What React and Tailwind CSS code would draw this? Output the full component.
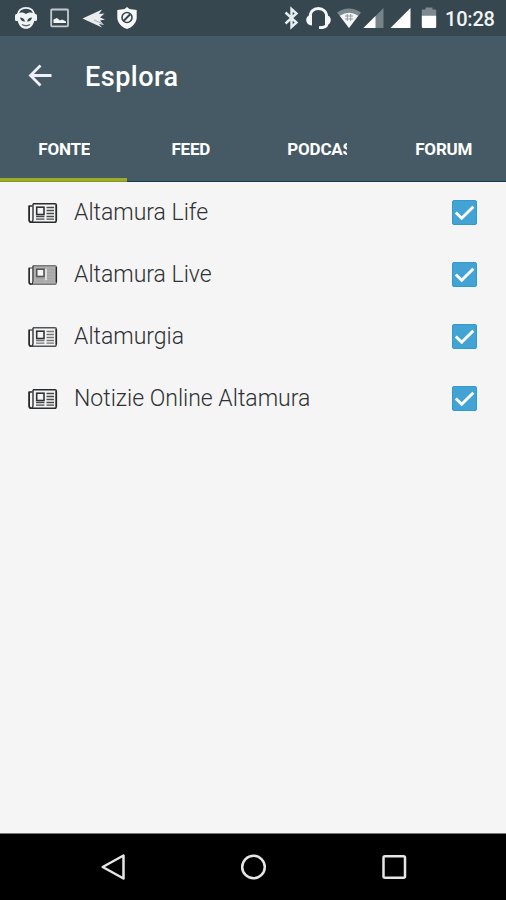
import React, { useState } from 'react';

const tabs = ['FONTE', 'FEED', 'PODCAST', 'FORUM'];

const sources = [
  { name: 'Altamura Life', variant: 'dark' },
  { name: 'Altamura Live', variant: 'faded' },
  { name: 'Altamurgia', variant: 'light' },
  { name: 'Notizie Online Altamura', variant: 'dark' },
];

function NotificationIcons() {
  return (
    <div className="flex items-center">
      {/* headphones face */}
      <svg className="ml-[14px] w-6 h-6" viewBox="0 0 24 24">
        <path d="M3.500 9C4.500 4 8 1.800 12 1.800S19.500 4 20.500 9" fill="none" stroke="#f1f4f5" strokeWidth="1.800" />
        <path d="M3.700 9C5 6 8 6 12 8C16 6 19 6 20.300 9V15C19 20 16 22.800 12 22.800S5 20 3.700 15Z" fill="#f1f4f5" />
        <path d="M6 11.500Q10 11.500 11 15.500Q7 16 6 11.500ZM18 11.500Q14 11.500 13 15.500Q17 16 18 11.500Z" fill="#37474f" />
        <path d="M8 18.500Q12 21 16 18.500" fill="none" stroke="#5c6b72" strokeWidth="1.300" />
        <rect x="1" y="8" width="3.400" height="7" rx="1.500" fill="#f1f4f5" />
        <rect x="19.600" y="8" width="3.400" height="7" rx="1.500" fill="#f1f4f5" />
      </svg>
      {/* screenshot */}
      <svg className="ml-[12px] w-5 h-5" viewBox="0 0 20 20">
        <rect x="1.200" y="1.500" width="16.800" height="16.800" rx="0.800" fill="none" stroke="#c3cbce" strokeWidth="1.800" />
        <path d="M3.500 15V11.500L7 10L10 12.500L12 11.500L16 13.500V15Z" fill="#f5f7f7" />
      </svg>
      {/* paper arrow */}
      <svg className="ml-[12px] w-6 h-6" viewBox="0 0 24 24">
        <path d="M0.500 12.500L20 3.500L17 8L22.500 7.500L18 11.500L23 13.500L18 14.500L22 19L17 18L20 21.500Z" fill="#e9edee" />
        <path d="M12 14L21 18" stroke="#8c999e" strokeWidth="0.800" />
      </svg>
      {/* blocked shield */}
      <svg className="ml-[9px] w-6 h-6" viewBox="0 0 24 24">
        <path d="M12 1L14.500 3L21.700 4V12.500C21 17.500 17 21.500 12 23C7 21.500 3 17.500 2.300 12.500V4L9.500 3Z" fill="#f8f9fa" />
        <circle cx="12" cy="11.500" r="5" fill="none" stroke="#37474f" strokeWidth="1.600" />
        <path d="M8.800 14.700L15.200 8.300" stroke="#37474f" strokeWidth="2" />
      </svg>
    </div>
  );
}

function SystemIcons() {
  return (
    <svg className="w-[156px] h-6" viewBox="282 6 156 24">
      {/* bluetooth */}
      <path d="M285.500 12.500L296.500 22.500L291.500 27V9L296.500 13.500L285.500 23.500" fill="none" stroke="#e8edef" strokeWidth="2.400" />
      {/* headset */}
      <path d="M310 21V17.500C310 11.500 313.500 8.500 318.300 8.500S326.800 11.500 326.800 17.500V24.500Q326.500 27.700 319 27.700" fill="none" stroke="#f5f7f8" strokeWidth="2.800" />
      <path d="M312 15V25.500Q306.500 25 306.200 20.300T312 15ZM325 15V25.500Q330.500 25 330.800 20.300T325 15Z" fill="#f5f7f8" />
      {/* wifi */}
      <path d="M337 12.500Q348.800 4.500 361 12.500L349 28Z" fill="#7c898f" />
      <path d="M339.800 15.800Q349 9.800 358.200 15.800L349 28Z" fill="#f4f6f7" />
      <path d="M345 16H353M345 19H353M347.300 14V21M350.700 14V21" fill="none" stroke="#929da2" strokeWidth="1" />
      {/* signal */}
      <path d="M383.500 8V28H363.500Z" fill="#76848a" />
      <path d="M375.500 16V28H363.500Z" fill="#fff" />
      <path d="M410.500 8V28H390.500Z" fill="#fff" />
      {/* battery */}
      <path d="M421.800 16V10Q421.800 9.500 422.500 9.500H425.500V7.500H432.500V9.500H435.500Q436.200 9.500 436.200 10V16Z" fill="#7d898e" />
      <path d="M421.800 15.800H436.200V27Q436.200 28 435 28H423Q421.800 28 421.800 27Z" fill="#fff" />
    </svg>
  );
}

function NewspaperIcon({ variant }) {
  const frame = variant === 'faded' ? '#77797a' : variant === 'light' ? '#525456' : '#292b2d';
  const lines = variant === 'faded' ? '#a4a4a4' : variant === 'light' ? '#747677' : '#47494a';
  return (
    <svg className="shrink-0 w-[30px] h-[22px]" viewBox="0 0 30 22">
      {variant === 'faded' && <path d="M6 2H27V20H6Z" fill="#b1b1b1" />}
      <path d="M5 1.700H27Q28.300 1.700 28.300 3V18.500Q28.300 20.300 26.500 20.300H3.500Q1.200 20.300 1.200 18V4H4.500" fill="none" stroke={frame} strokeWidth="1.500" />
      <path d="M1.200 4V18Q1.200 20.300 3.200 20.300M28.300 3V18.500" fill="none" stroke="#252729" strokeWidth="1.500" />
      <path d="M5 1.700V17.500Q5 19.500 3.500 20" fill="none" stroke="#303234" strokeWidth="1.400" />
      <path d="M18.500 5.500H26M18.500 8.500H26M18.500 11.500H26M18.500 14.500H26M18.500 17.200H26M8 14.500H16.500M8 17.200H16.500" stroke={lines} strokeWidth="1.300" />
      <rect x="8.700" y="5.200" width="7.300" height="7.300" fill="#f5f5f5" stroke={variant === 'faded' ? '#555' : '#303234'} strokeWidth="1.600" />
      {variant === 'faded' && <path d="M18 5V16" stroke="#f0f0f0" strokeWidth="1.500" />}
    </svg>
  );
}

function SourceRow({ source }) {
  const [checked, setChecked] = useState(true);

  return (
    <div className="h-[62px] flex items-center pl-[28px] pr-[29px]">
      <NewspaperIcon variant={source.variant} />
      <span className="ml-[16px] pb-[1px] text-[23px] leading-[32px] font-light text-[#2f3133] whitespace-nowrap">
        {source.name}
      </span>
      <button
        onClick={() => setChecked(!checked)}
        className="ml-auto mb-[2px] w-[25px] h-[25px] rounded-[2px] bg-[#43a3d5] border border-[#309aca]"
      >
        {checked && (
          <svg className="w-[23px] h-[23px]" viewBox="0 0 23 23">
            <path d="M2.800 11.500L8.700 17.200L20.300 5.700" fill="none" stroke="#fff" strokeWidth="2.900" />
          </svg>
        )}
      </button>
    </div>
  );
}

function App() {
  const [active, setActive] = useState(0);

  return (
    <div className="w-[506px] h-[900px] flex flex-col overflow-hidden bg-[#f5f5f5] font-['Roboto','Noto_Sans',sans-serif]">
      {/* Status bar */}
      <div className="h-[36px] shrink-0 flex items-center justify-between bg-[#37474f] text-white">
        <NotificationIcons />
        <div className="flex items-center pr-[10px]">
          <SystemIcons />
          <span className="ml-[7px] w-[51px] text-[20px] leading-[24px] font-medium tracking-[-0.200px] pt-[2px] text-[#f1f4f5]">10:28</span>
        </div>
      </div>

      {/* Toolbar */}
      <header className="h-[146px] shrink-0 bg-[#455a64] text-white flex flex-col">
        <div className="h-[80px] flex items-center">
          <svg className="ml-[27px] w-[26px] h-[26px]" viewBox="0 0 26 26">
            <path d="M13.500 2.500L3.500 12.500L13.500 22.500M3.500 12.500H24.500" fill="none" stroke="#f1f0f8" strokeWidth="2.800" />
          </svg>
          <h1 className="ml-[32px] text-[27px] leading-[32px] font-medium tracking-[0.500px] pt-[1px]">Esplora</h1>
        </div>
        <nav className="h-[66px] grid grid-cols-4">
          {tabs.map((tab, index) => (
            <button
              key={tab}
              onClick={() => setActive(index)}
              className={`flex justify-center items-center pt-[2px] pl-[2px] text-[17px] font-bold border-b ${
                active === index ? 'shadow-[inset_0_-3px_0_#9dab27] border-[#849522]' : 'border-[#153d50]'
              }`}
            >
              <span className="max-w-[60px] overflow-hidden whitespace-nowrap tracking-[-0.200px]">{tab}</span>
            </button>
          ))}
        </nav>
      </header>

      {/* Sources */}
      <main className="flex-1">
        {sources.map((source) => (
          <SourceRow key={source.name} source={source} />
        ))}
      </main>

      {/* Navigation bar */}
      <footer className="h-[67px] shrink-0 bg-black border-t border-[#777] flex items-center justify-center">
        <svg className="w-[310px] h-[30px]" viewBox="98 852 310 30">
          <g fill="none" stroke="#e6e6e6" strokeWidth="2.500" strokeLinejoin="round">
            <path d="M102.700 867L123.500 855.500V878.500Z" />
            <circle cx="253.500" cy="867" r="11.300" />
            <rect x="383.500" y="856.300" width="21.500" height="21.500" rx="1.500" />
          </g>
        </svg>
      </footer>
    </div>
  );
}

export default App;
